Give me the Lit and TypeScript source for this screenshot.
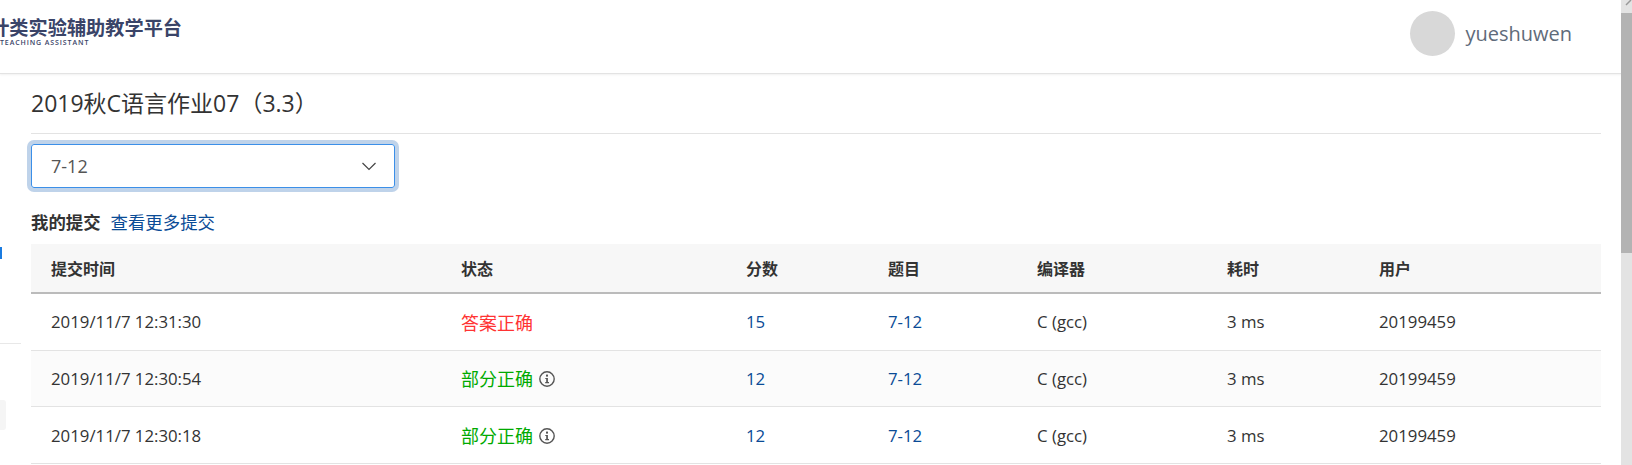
import { LitElement, html, css } from "lit";
import { customElement } from "lit/decorators.js";

const rows = [
  { t: "2019/11/7 12:31:30", s: "答案正确", ok: true, score: "15" },
  { t: "2019/11/7 12:30:54", s: "部分正确", ok: false, score: "12" },
  { t: "2019/11/7 12:30:18", s: "部分正确", ok: false, score: "12" },
];

@customElement("app-root")
export class AppRoot extends LitElement {
  static styles = css`
    :host {
      display: block;
      width: 1632px;
      height: 465px;
      overflow: hidden;
      background: #fff;
      color: #333;
      font-family: "Open Sans", "Noto Sans", "Noto Sans CJK SC", sans-serif;
      font-size: 14px;
      position: relative;
    }
    .header {
      height: 74px;
      box-sizing: border-box;
      border-bottom: 1px solid #e3e3e3;
      box-shadow: 0 1px 2px rgba(0, 0, 0, 0.06);
      display: flex;
      align-items: flex-start;
      justify-content: space-between;
      padding-right: 60px;
    }
    .logo {
      display: flex;
      flex-direction: column;
      margin-left: -29px;
      padding-top: 16px;
    }
    .logo-cn {
      font-size: 19.2px;
      font-weight: 700;
      color: #3a4468;
      line-height: 24px;
      white-space: nowrap;
    }
    .logo-en {
      font-size: 7px;
      font-weight: 600;
      color: #3a4468;
      letter-spacing: 0.9px;
      line-height: 8px;
      margin-top: -1px;
      padding-left: 29px;
      white-space: nowrap;
    }
    .user {
      display: flex;
      align-items: center;
      gap: 10px;
      font-size: 20px;
      color: #5f6b7a;
      padding-top: 11px;
    }
    .avatar {
      width: 45px;
      height: 45px;
      border-radius: 50%;
      background: #d8d8d8;
    }
    .main {
      padding: 0 31px;
      width: 1570px;
    }
    h1 {
      margin: 0;
      font-size: 23px;
      font-weight: 400;
      color: #333;
      line-height: 58px;
      height: 60px;
      box-sizing: border-box;
      border-bottom: 1px solid #e3e3e3;
    }
    .select {
      margin-top: 10px;
      width: 364px;
      height: 44px;
      box-sizing: border-box;
      border: 1px solid #3b8fe8;
      border-radius: 3px;
      box-shadow: 0 0 0 4px #bfd3ea;
      display: flex;
      align-items: center;
      justify-content: space-between;
      padding: 0 18px 0 19px;
      font-size: 18px;
      color: #555;
    }
    .select svg {
      display: block;
    }
    .sub {
      display: flex;
      gap: 10px;
      margin-top: 23px;
      line-height: 22px;
      font-size: 17.4px;
    }
    .sub b {
      font-weight: 700;
    }
    a {
      color: #0a4b96;
      text-decoration: none;
    }
    .sub + .table {
      margin-top: 11px;
    }
    .table {
      display: grid;
      grid-template-columns: 410px 285px 142px 149px 190px 152px 1fr;
      width: 1570px;
    }
    .cell {
      padding-left: 20px;
      display: flex;
      align-items: center;
      height: 55.67px;
      border-bottom: 1px solid #e3e3e3;
      font-size: 16.8px;
    }
    .th {
      background: #f7f7f7;
      border-bottom: 2px solid #bbb;
      font-weight: 700;
      font-size: 16px;
      height: 48px;
    }
    .alt {
      background: #fbfbfb;
    }
    .ok {
      color: #f33;
      font-size: 18px;
    }
    .part {
      color: #0a0;
      font-size: 18px;
    }
    .info {
      margin-left: 6px;
      margin-top: 1px;
      display: block;
    }
    .bar {
      position: absolute;
      top: 0;
      right: 0;
      bottom: 0;
      width: 11px;
      background: #e3e3e3;
    }
    .bar-top {
      height: 13px;
      background: #e3e3e3;
    }
    .bar-top svg {
      display: block;
    }
    .bar-thumb {
      height: 240px;
      background: #b3b3b3;
    }
    .side-line {
      position: absolute;
      left: 0;
      top: 343px;
      width: 21px;
      height: 1px;
      background: #e8e8e8;
    }
    .side-box {
      position: absolute;
      left: 0;
      top: 400px;
      width: 6px;
      height: 30px;
      background: #f5f5f5;
      border-radius: 0 3px 3px 0;
    }
    .side-dot {
      position: absolute;
      left: 0;
      top: 247px;
      width: 1.5px;
      height: 12px;
      background: #1a7be0;
    }
  `;

  private info() {
    return html`<svg class="info" width="16" height="16" viewBox="0 0 16 16" fill="none">
      <circle cx="8" cy="8" r="7.2" stroke="#555" stroke-width="1.4"></circle>
      <rect x="7" y="3.6" width="2" height="2" fill="#555"></rect>
      <path d="M6.3 7 H8.9 V11 H10 V12.2 H6.2 V11 H7.2 V8.1 H6.3 Z" fill="#555"></path>
    </svg>`;
  }

  render() {
    const heads = ["提交时间", "状态", "分数", "题目", "编译器", "耗时", "用户"];
    return html`
      <div class="header">
        <div class="logo">
          <div class="logo-cn">设计类实验辅助教学平台</div>
          <div class="logo-en">TEACHING ASSISTANT</div>
        </div>
        <div class="user"><div class="avatar"></div><span>yueshuwen</span></div>
      </div>
      <div class="main">
        <h1>2019秋C语言作业07（3.3）</h1>
        <div class="select">
          <span>7-12</span>
          <svg width="14" height="9" viewBox="0 0 14 9" fill="none">
            <path d="M0.5 1 L7 7.5 L13.5 1" stroke="#444" stroke-width="1.2"></path>
          </svg>
        </div>
        <div class="sub"><b>我的提交</b><a href="#">查看更多提交</a></div>
        <div class="table">
          ${heads.map((h) => html`<div class="cell th">${h}</div>`)}
          ${rows.map((r, i) => {
            const alt = i % 2 === 1 ? "alt" : "";
            return html`
              <div class="cell ${alt}">${r.t}</div>
              <div class="cell ${alt}">
                <span class=${r.ok ? "ok" : "part"}>${r.s}</span>${r.ok ? "" : this.info()}
              </div>
              <div class="cell ${alt}"><a href="#">${r.score}</a></div>
              <div class="cell ${alt}"><a href="#">7-12</a></div>
              <div class="cell ${alt}">C (gcc)</div>
              <div class="cell ${alt}">3 ms</div>
              <div class="cell ${alt}">20199459</div>
            `;
          })}
        </div>
      </div>
      <div class="side-dot"></div>
      <div class="side-line"></div>
      <div class="side-box"></div>
      <div class="bar">
        <div class="bar-top">
          <svg width="11" height="13" viewBox="0 0 11 13" fill="none">
            <path d="M5 5 L10 0" stroke="#999" stroke-width="1.5"></path>
          </svg>
        </div>
        <div class="bar-thumb"></div>
      </div>
    `;
  }
}
